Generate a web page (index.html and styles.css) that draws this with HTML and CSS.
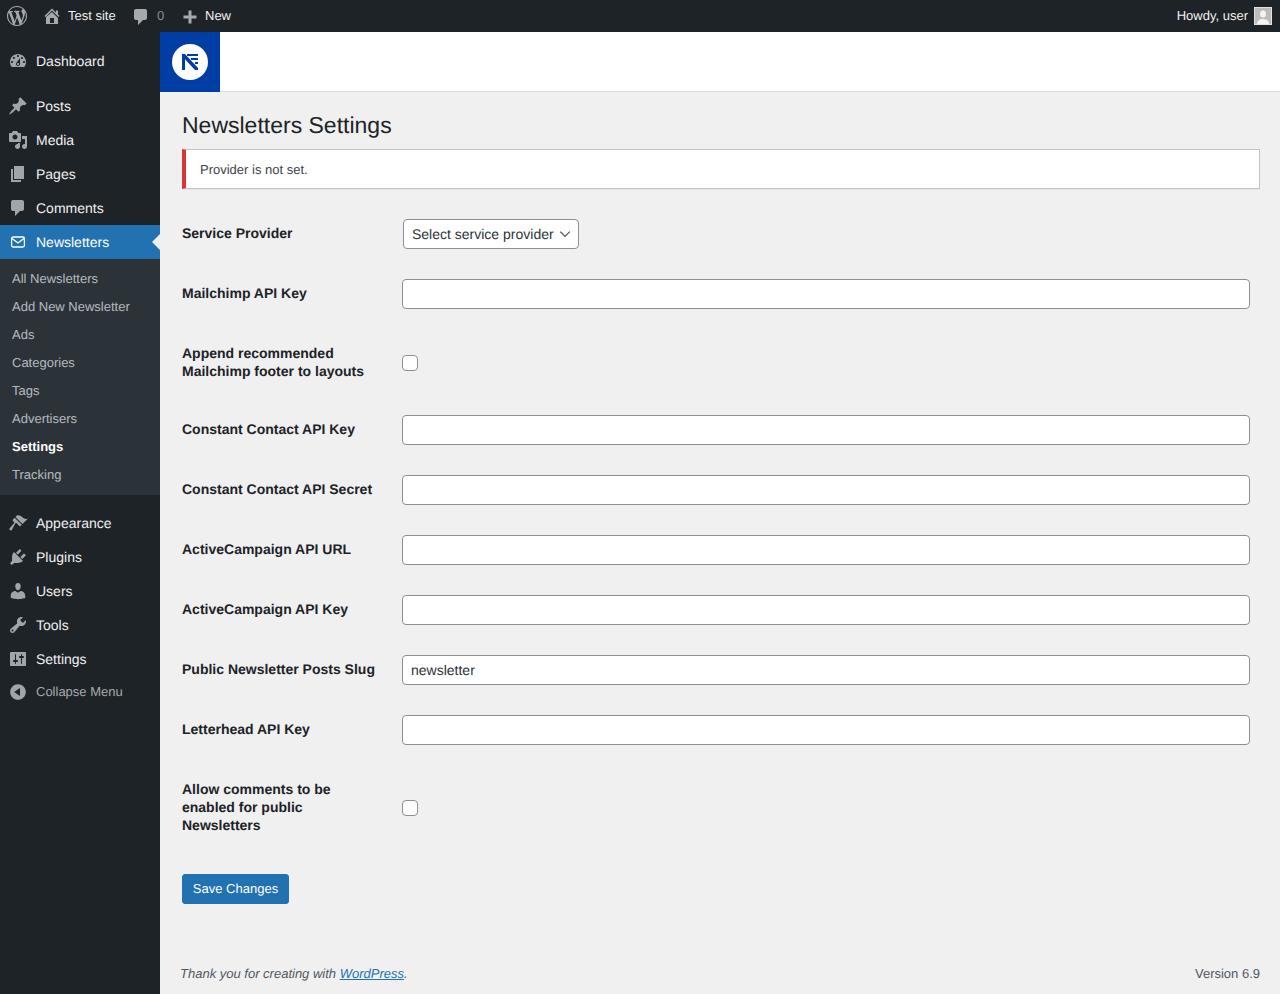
FILE: index.html
```html
<!DOCTYPE html>
<html lang="en">
<head>
<meta charset="utf-8">
<title>Newsletters Settings</title>
<link rel="stylesheet" href="styles.css">
</head>
<body>
<header class="adminbar">
  <div class="bar-left">
    <a class="bar-item bar-logo"><svg class="ico" viewBox="0 0 20 20"><path d="M20 10c0-5.51-4.49-10-10-10C4.48 0 0 4.49 0 10c0 5.52 4.48 10 10 10 5.51 0 10-4.48 10-10zM7.78 15.37L4.37 6.22c.55-.02 1.17-.08 1.17-.08.5-.06.44-1.13-.06-1.11 0 0-1.45.11-2.37.11-.18 0-.37 0-.58-.01C4.12 2.69 6.87 1.11 10 1.11c2.33 0 4.45.87 6.05 2.34-.68-.11-1.65.39-1.65 1.58 0 .74.45 1.36.9 2.1.35.61.55 1.36.55 2.46 0 1.49-1.4 5-1.4 5l-3.03-8.37c.54-.02.82-.17.82-.17.5-.05.44-1.25-.06-1.22 0 0-1.44.12-2.38.12-.87 0-2.33-.12-2.33-.12-.5-.03-.56 1.2-.06 1.22l.92.08 1.26 3.41zM17.41 10c.24-.64.74-1.87.43-4.25.7 1.29 1.05 2.71 1.05 4.25 0 3.29-1.73 6.24-4.4 7.78.97-2.59 1.94-5.2 2.92-7.78zM6.1 18.09C3.12 16.65 1.11 13.53 1.11 10c0-1.3.23-2.48.72-3.59C3.25 10.3 4.67 14.2 6.1 18.09zm4.03-6.63l2.58 6.98c-.86.29-1.76.45-2.71.45-.79 0-1.57-.11-2.29-.33.81-2.38 1.62-4.74 2.42-7.1z"/></svg></a>
    <a class="bar-item bar-site"><svg class="ico" viewBox="0 0 20 20"><path d="M16 8.5l1.53 1.53-1.06 1.06L10 4.62l-6.47 6.47-1.06-1.06L10 2.5l4 4v-2h2v4zm-6-2.46l6 5.99V18H4v-6.97zM12 17v-5H8v5h4z"/></svg><span>Test site</span></a>
    <a class="bar-item bar-comments"><svg class="ico low" viewBox="0 0 20 20"><path d="M5 2h9c1.1 0 2 .9 2 2v7c0 1.1-.9 2-2 2h-2l-5 5v-5H5c-1.1 0-2-.9-2-2V4c0-1.1.9-2 2-2z"/></svg><span class="count">0</span></a>
    <a class="bar-item bar-new"><svg class="ico low" viewBox="0 0 20 20"><path d="M16.500 8.500v3h-5v5h-3v-5h-5v-3h5v-5h3v5z"/></svg><span>New</span></a>
  </div>
  <div class="bar-right">
    <span>Howdy, user</span>
    <svg class="avatar" viewBox="0 0 18 18"><rect width="18" height="18" fill="#e2e2e2"/><rect x="1" y="1" width="16" height="16" fill="#bcbcbc"/><ellipse cx="9" cy="7" rx="3" ry="3.500" fill="#f4f4f4"/><path d="M3 17c0-3.500 2.500-5 6-5s6 1.500 6 5z" fill="#f4f4f4"/></svg>
  </div>
</header>
<div class="layout">
  <nav class="sidebar">
    <ul class="menu">
      <li class="item"><svg class="ico" viewBox="0 0 20 20"><path d="M3.76 16h12.48c1.1-1.37 1.76-3.11 1.76-5 0-4.42-3.58-8-8-8s-8 3.58-8 8c0 1.89.66 3.63 1.76 5zM10 4c.55 0 1 .45 1 1s-.45 1-1 1-1-.45-1-1 .45-1 1-1zM6 6c.55 0 1 .45 1 1s-.45 1-1 1-1-.45-1-1 .45-1 1-1zm8 0c.55 0 1 .45 1 1s-.45 1-1 1-1-.45-1-1 .45-1 1-1zm-5.37 5.55L12 7v6c0 1.1-.9 2-2 2s-2-.9-2-2c0-.57.24-1.08.63-1.45zM4 10c.55 0 1 .45 1 1s-.45 1-1 1-1-.45-1-1 .45-1 1-1zm12 0c.55 0 1 .45 1 1s-.45 1-1 1-1-.45-1-1 .45-1 1-1zm-5 3c0-.55-.45-1-1-1s-1 .45-1 1 .45 1 1 1 1-.45 1-1z"/></svg><span>Dashboard</span></li>
      <li class="sep"></li>
      <li class="item"><svg class="ico" viewBox="0 0 20 20"><path d="M10.44 3.02l1.82-1.82 6.36 6.35-1.83 1.82c-1.05-.68-2.48-.57-3.41.36l-.75.75c-.92.93-1.04 2.35-.35 3.41l-1.83 1.82-2.41-2.41-2.8 2.79c-.42.42-3.38 2.71-3.8 2.29s1.86-3.39 2.28-3.81l2.79-2.79L4.1 9.36l1.83-1.82c1.05.69 2.48.57 3.4-.36l.75-.75c.93-.92 1.05-2.35.36-3.41z"/></svg><span>Posts</span></li>
      <li class="item"><svg class="ico" viewBox="0 0 20 20"><path d="M13 11V4c0-.55-.45-1-1-1h-1.67L9 1H5L3.67 3H2c-.55 0-1 .45-1 1v7c0 .55.45 1 1 1h10c.55 0 1-.45 1-1zM7 4.500c1.380 0 2.500 1.120 2.500 2.500S8.380 9.500 7 9.500 4.500 8.380 4.500 7 5.620 4.500 7 4.500zM14 6h5v10.500c0 1.380-1.120 2.500-2.500 2.500S14 17.880 14 16.500s1.120-2.500 2.500-2.500c.17 0 .34.02.5.05V9h-3V6zm-4 8.050V13h2v3.500c0 1.380-1.120 2.500-2.500 2.500S7 17.880 7 16.500 8.120 14 9.500 14c.17 0 .34.02.5.05z"/></svg><span>Media</span></li>
      <li class="item"><svg class="ico" viewBox="0 0 20 20"><path d="M6 15V2h10v13H6zm-1 1h8v2H3V5h2v11z"/></svg><span>Pages</span></li>
      <li class="item"><svg class="ico" viewBox="0 0 20 20"><path d="M5 2h9c1.100 0 2 .9 2 2v7c0 1.100-.9 2-2 2h-2l-5 5v-5H5c-1.100 0-2-.9-2-2V4c0-1.100.9-2 2-2z"/></svg><span>Comments</span></li>
      <li class="item active"><svg class="ico" viewBox="0 0 20 20"><rect x="3.600" y="5" width="12.800" height="10" rx="1.500" fill="none" stroke="currentColor" stroke-width="1.300"/><path d="M4 6.500l6 4.500 6-4.500" fill="none" stroke="currentColor" stroke-width="1.300"/></svg><span>Newsletters</span></li>
      <li class="submenu">
        <a>All Newsletters</a>
        <a>Add New Newsletter</a>
        <a>Ads</a>
        <a>Categories</a>
        <a>Tags</a>
        <a>Advertisers</a>
        <a class="current">Settings</a>
        <a>Tracking</a>
      </li>
      <li class="sep"></li>
      <li class="item"><svg class="ico" viewBox="0 0 20 20"><path d="M14.480 11.060L7.410 3.990l1.500-1.500c.5-.56 2.300-.47 3.510.32 1.210.8 1.430 1.280 2.910 2.100 1.180.64 2.450 1.260 4.450.85zm-.71.71L6.700 4.700 4.930 6.470c-.39.39-.39 1.020 0 1.410l1.060 1.060c.39.39.39 1.030 0 1.420l-4.300 4.800c-.5.6-.3 1.300.2 1.800s1.200.7 1.800.2L7.410 10.360c.39-.39 1.020-.39 1.410 0l1.060 1.060L12 13.540z"/></svg><span>Appearance</span></li>
      <li class="item"><svg class="ico" viewBox="0 0 20 20"><path d="M13.110 4.360L9.870 7.600 8 5.730l3.240-3.240c.35-.34 1.050-.2 1.560.32.52.51.66 1.210.31 1.550zm-8 1.770l.91-1.120 9.010 9.010-1.190.84c-.71.71-2.630 1.160-3.820 1.160H6.140L4.900 17.260c-.59.59-1.540.59-2.120 0-.59-.58-.59-1.530 0-2.120l1.240-1.240v-3.880c0-1.130.4-3.190 1.090-3.890zm7.260 3.970l3.240-3.240c.34-.35 1.040-.21 1.550.31.52.51.66 1.210.31 1.550l-3.240 3.250z"/></svg><span>Plugins</span></li>
      <li class="item"><svg class="ico" viewBox="0 0 20 20"><path d="M10 9.250c-2.270 0-2.730-3.440-2.730-3.440C7 4.020 7.820 2 9.970 2c2.160 0 2.980 2.020 2.710 3.810 0 0-.41 3.440-2.680 3.440zm0 2.570L12.720 10c2.390 0 4.520 2.330 4.520 4.530v2.490s-3.650 1.130-7.240 1.130c-3.650 0-7.240-1.130-7.240-1.130v-2.490c0-2.250 1.940-4.480 4.470-4.480z"/></svg><span>Users</span></li>
      <li class="item"><svg class="ico" viewBox="0 0 20 20"><path d="M16.680 9.770c-1.340 1.340-3.300 1.670-4.950.99l-5.410 6.520c-.99.99-2.590.99-3.580 0s-.99-2.590 0-3.570l6.520-5.420c-.68-1.650-.35-3.610.99-4.950 1.280-1.280 3.120-1.620 4.720-1.060l-2.890 2.890 2.820 2.820 2.860-2.870c.53 1.580.18 3.390-1.080 4.650zM3.810 16.210c.4.39 1.040.39 1.430 0 .4-.4.4-1.040 0-1.430-.39-.4-1.030-.4-1.430 0-.39.39-.39 1.030 0 1.430z"/></svg><span>Tools</span></li>
      <li class="item"><svg class="ico" viewBox="0 0 20 20"><path d="M18 16V4c0-.55-.45-1-1-1H3c-.55 0-1 .45-1 1v12c0 .55.45 1 1 1h14c.55 0 1-.45 1-1zM8 11h1c.55 0 1 .45 1 1s-.45 1-1 1H8v1.500c0 .28-.22.5-.5.5s-.5-.22-.5-.5V13H6c-.55 0-1-.45-1-1s.45-1 1-1h1V5.500c0-.28.22-.5.5-.5s.5.22.5.5V11zm5-2h-1c-.55 0-1-.45-1-1s.45-1 1-1h1V5.500c0-.28.22-.5.5-.5s.5.22.5.5V7h1c.55 0 1 .45 1 1s-.45 1-1 1h-1v5.500c0 .28-.22.5-.5.5s-.5-.22-.5-.5V9z"/></svg><span>Settings</span></li>
      <li class="collapse"><svg class="ico" viewBox="0 0 20 20"><path d="M10 2.160c4.330 0 7.840 3.510 7.840 7.840s-3.510 7.840-7.840 7.840S2.160 14.330 2.160 10 5.710 2.160 10 2.160zm2 11.720V6.120L6.180 9.970z"/></svg><span>Collapse Menu</span></li>
    </ul>
  </nav>
  <div class="main">
    <div class="brandbar">
      <div class="brand">
        <svg class="brand-mark" viewBox="0 0 36 36"><circle cx="18" cy="18" r="18" fill="#fff"/><path d="M10 10h3l13 14v2h-3L13 15.200V26h-3z" fill="#003da5"/><path d="M15 10h11v2H15zM19 14h7v2h-7zM23 18h3v2h-3z" fill="#003da5"/></svg>
      </div>
    </div>
    <div class="wrap">
      <h1 class="title">Newsletters Settings</h1>
      <div class="notice"><p>Provider is not set.</p></div>
      <form>
        <table class="form-table">
          <tbody>
            <tr><th>Service Provider</th><td><select class="select"><option>Select service provider</option></select></td></tr>
            <tr><th>Mailchimp API Key</th><td><input class="text" type="text"></td></tr>
            <tr><th>Append recommended Mailchimp footer to layouts</th><td><input class="check" type="checkbox"></td></tr>
            <tr><th>Constant Contact API Key</th><td><input class="text" type="text"></td></tr>
            <tr><th>Constant Contact API Secret</th><td><input class="text" type="text"></td></tr>
            <tr><th>ActiveCampaign API URL</th><td><input class="text" type="text"></td></tr>
            <tr><th>ActiveCampaign API Key</th><td><input class="text" type="text"></td></tr>
            <tr><th>Public Newsletter Posts Slug</th><td><input class="text" type="text" value="newsletter"></td></tr>
            <tr><th>Letterhead API Key</th><td><input class="text" type="text"></td></tr>
            <tr><th>Allow comments to be enabled for public Newsletters</th><td><input class="check" type="checkbox"></td></tr>
          </tbody>
        </table>
        <div class="submit"><button class="button" type="button">Save Changes</button></div>
      </form>
    </div>
    <footer class="footer">
      <span class="thanks">Thank you for creating with <a class="link">WordPress</a>.</span>
      <span>Version 6.9</span>
    </footer>
  </div>
</div>
</body>
</html>
```
FILE: styles.css
```css
* { box-sizing: border-box; }
html, body { margin: 0; padding: 0; }
body {
  background: #f0f0f1;
  color: #3c434a;
  font-family: "Liberation Sans", Arial, sans-serif;
  font-size: 13px;
  line-height: 1.4;
  height: 994px;
  overflow: hidden;
  text-rendering: geometricPrecision;
}
.ico { width: 20px; height: 20px; fill: currentColor; flex: none; display: block; }
.ico.low { margin-top: 2px; }

.adminbar {
  height: 32px;
  background: #1d2327;
  color: #f0f0f1;
  display: flex;
  justify-content: space-between;
  align-items: center;
  line-height: 32px;
}
.bar-left { display: flex; align-items: center; }
.bar-item { display: flex; align-items: center; }
.bar-item .ico { color: #a7aaad; }
.bar-logo { padding-left: 7px; width: 42px; }
.bar-site { gap: 6px; width: 89px; }
.bar-comments { gap: 6px; width: 49px; }
.count { color: #8a8e92; }
.bar-new { gap: 5px; }
.bar-right { display: flex; align-items: center; gap: 6px; padding-right: 8px; }
.avatar { width: 18px; height: 18px; display: block; }

.layout { display: flex; height: 962px; }
.sidebar { width: 160px; background: #1d2327; flex: none; padding-top: 12px; }
.menu { list-style: none; margin: 0; padding: 0; }
.item {
  position: relative;
  height: 34px;
  display: flex;
  align-items: center;
  font-size: 14px;
  color: #f0f0f1;
  padding-left: 8px;
  gap: 8px;
}
.item span { margin-top: 2px; }
.item .ico { color: #a0a5aa; }
.sep { height: 11px; }
.item.active { background: #2271b1; color: #fff; }
.item.active .ico { color: #fff; }
.item.active::after {
  content: "";
  position: absolute;
  right: 0;
  top: 9px;
  border: 8px solid transparent;
  border-left-width: 0;
  border-right-color: #f0f0f1;
}
.submenu {
  background: #2c3338;
  padding: 6px 0;
  display: flex;
  flex-direction: column;
}
.submenu a {
  height: 28px;
  line-height: 28px;
  padding-left: 12px;
  font-size: 13px;
  color: rgba(240, 246, 252, 0.7);
}
.submenu a.current { color: #fff; font-weight: 700; }
.collapse {
  display: flex;
  align-items: center;
  gap: 8px;
  padding-left: 8px;
  height: 32px;
  color: #a7aaad;
  font-size: 13px;
}
.collapse .ico { color: #a0a5aa; }

.main { flex: 1; display: flex; flex-direction: column; min-width: 0; }
.brandbar { height: 60px; background: #fff; box-shadow: inset 0 -1px 0 #dcdcde; flex: none; }
.brand { width: 60px; height: 60px; background: #003da5; display: flex; align-items: center; justify-content: center; }
.brand-mark { width: 36px; height: 36px; display: block; }
.wrap { padding: 10px 20px 0 22px; flex: 1; }
.title {
  margin: 0;
  padding: 9px 0 4px;
  font-size: 23px;
  font-weight: 400;
  line-height: 1.3;
  color: #1d2327;
}
.notice {
  margin: 4px 0 15px;
  height: 40px;
  display: flex;
  align-items: center;
  background: #fff;
  border: 1px solid #c3c4c7;
  border-left: 4px solid #d63638;
  box-shadow: 0 1px 1px rgba(0, 0, 0, 0.04);
  padding: 2px 0 0 14px;
}
.notice p { margin: 0; color: #3c434a; }
.form-table { width: 100%; border-collapse: collapse; table-layout: fixed; }
.form-table th {
  width: 210px;
  padding: 20px 10px 20px 0;
  text-align: left;
  vertical-align: top;
  font-size: 14px;
  font-weight: 600;
  line-height: 18px;
  color: #1d2327;
}
.form-table td { padding: 15px 10px; vertical-align: middle; }
.text, .select {
  height: 30px;
  font-family: inherit;
  font-size: 14px;
  color: #2c3338;
  background-color: #fff;
  border: 1px solid #8c8f94;
  border-radius: 4px;
  display: block;
  margin: 0;
  text-rendering: geometricPrecision;
}
.text { width: 100%; padding: 0 8px; outline: 0; }
.select {
  appearance: none;
  -webkit-appearance: none;
  width: 176px;
  margin-left: 1px;
  padding: 0 24px 0 8px;
  background-image: url("data:image/svg+xml,%3Csvg xmlns='http://www.w3.org/2000/svg' viewBox='0 0 20 20'%3E%3Cpath d='M4 7l6 6 6-6' fill='none' stroke='%2350575e' stroke-width='1.6'/%3E%3C/svg%3E");
  background-repeat: no-repeat;
  background-size: 16px 16px;
  background-position: right 5px top 55%;
}
.check {
  appearance: none;
  -webkit-appearance: none;
  width: 16px;
  height: 16px;
  margin: 2px 0 0;
  display: block;
  background: #fff;
  border: 1px solid #8c8f94;
  border-radius: 4px;
}
.submit { margin-top: 20px; }
.button {
  display: block;
  height: 30px;
  width: 107px;
  padding: 0;
  background: #2271b1;
  border: 1px solid #2271b1;
  border-radius: 3px;
  color: #fff;
  font-family: inherit;
  font-size: 13px;
  text-rendering: geometricPrecision;
}
.footer {
  display: flex;
  justify-content: space-between;
  padding: 0 20px;
  height: 29px;
  flex: none;
  line-height: 18px;
  color: #50575e;
}
.thanks { font-style: italic; }
.link { color: #2271b1; text-decoration: underline; }
```
